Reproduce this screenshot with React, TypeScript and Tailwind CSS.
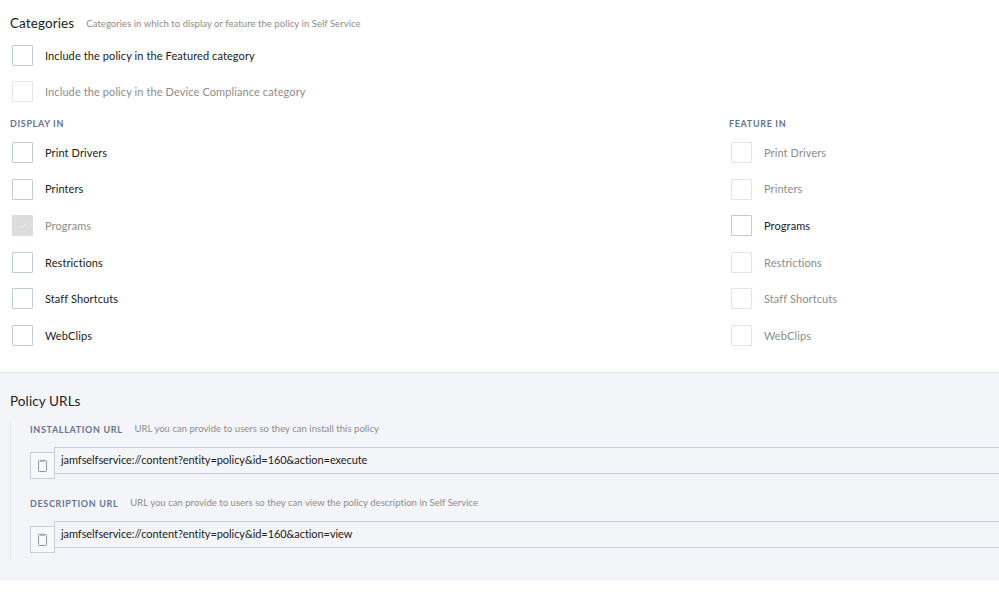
import { Check } from "lucide-react";

const font = { fontFamily: '"Lato", "Liberation Sans", sans-serif' };

function Box({ state }: { state: "on" | "off" | "checked" }) {
  if (state === "checked") {
    return (
      <span className="flex h-[21px] w-[21px] shrink-0 items-center justify-center rounded-[1px] bg-[#dcdcdc]">
        <Check className="h-2.5 w-2.5 text-white" strokeWidth={1.5} />
      </span>
    );
  }
  return (
    <span
      className={
        state === "on"
          ? "h-[21px] w-[21px] shrink-0 rounded-[1px] border border-[#c3cbd6] bg-white"
          : "h-[21px] w-[21px] shrink-0 rounded-[1px] border border-[#e2e4e8] bg-white"
      }
    />
  );
}

function Row({ label, state }: { label: string; state: "on" | "off" | "checked" }) {
  return (
    <div className="flex h-[36.6px] items-center">
      <Box state={state} />
      <span
        className={
          state === "on"
            ? "ml-3 pt-[1px] text-[11px] tracking-[0.1px] text-[#222]"
            : "ml-3 pt-[1px] text-[11px] tracking-[0.1px] text-[#8c8c8c]"
        }
      >
        {label}
      </span>
    </div>
  );
}

function Clipboard() {
  return (
    <svg width="11" height="13" viewBox="0 0 11 13" fill="none" stroke="#949494" strokeWidth="1">
      <rect x="1.5" y="1.5" width="8" height="11" rx="0.8" />
      <path d="M3.5 1h4v1.5h-4z" fill="#c4c4c4" strokeWidth="0.6" />
    </svg>
  );
}

function UrlField({ title, hint, url }: { title: string; hint: string; url: string }) {
  return (
    <div className="mb-[17px]">
      <div className="flex h-[14px] items-center pt-[1px]">
        <span className="text-[9px] font-bold tracking-[0.65px] text-[#64748f]">{title}</span>
        <span className="ml-[12px] text-[9.5px] tracking-[0.03px] text-[#8c8c8c]">{hint}</span>
      </div>
      <div className="mt-[11px] flex items-start">
        <button className="relative z-10 mt-[5px] flex h-[27px] w-[25px] shrink-0 items-center justify-center border border-[#c9ced8] bg-[#f7f8fa]">
          <Clipboard />
        </button>
        <div className="-ml-px -mr-2 flex h-[27px] flex-1 border border-[#c9ced8] bg-[#f4f5f9] pl-[6px] pt-[3px] text-[11px] leading-[17px] tracking-[-0.07px] text-[#222]">
          {url}
        </div>
      </div>
    </div>
  );
}

export default function App() {
  return (
    <div className="h-[610px] w-[999px] overflow-hidden bg-white" style={font}>
      <div className="px-[10px] pt-[15px]">
        <div className="flex h-4 items-center">
          <h2 className="text-[13.5px] tracking-[0.1px] text-[#222]">Categories</h2>
          <span className="ml-[12px] pt-[2px] text-[9.5px] tracking-[0.05px] text-[#8c8c8c]">
            Categories in which to display or feature the policy in Self Service
          </span>
        </div>
        <div className="mt-[6px] pl-[2px]">
          <Row label="Include the policy in the Featured category" state="on" />
          <Row label="Include the policy in the Device Compliance category" state="off" />
        </div>
        <div className="mt-[7px] grid grid-cols-[719px_1fr]">
          <div>
            <div className="h-[14px] text-[9px] font-bold leading-[14px] tracking-[0.65px] text-[#64748f]">DISPLAY IN</div>
            <div className="mt-[3px] pl-[2px]">
              <Row label="Print Drivers" state="on" />
              <Row label="Printers" state="on" />
              <Row label="Programs" state="checked" />
              <Row label="Restrictions" state="on" />
              <Row label="Staff Shortcuts" state="on" />
              <Row label="WebClips" state="on" />
            </div>
          </div>
          <div>
            <div className="h-[14px] text-[9px] font-bold leading-[14px] tracking-[0.65px] text-[#64748f]">FEATURE IN</div>
            <div className="mt-[3px] pl-[2px]">
              <Row label="Print Drivers" state="off" />
              <Row label="Printers" state="off" />
              <Row label="Programs" state="on" />
              <Row label="Restrictions" state="off" />
              <Row label="Staff Shortcuts" state="off" />
              <Row label="WebClips" state="off" />
            </div>
          </div>
        </div>
      </div>
      <section className="mt-[18px] h-[209px] border-t border-[#e6e8ec] bg-[#f4f5f9] px-[10px] pt-[20px]">
        <h2 className="h-4 text-[13.5px] leading-4 tracking-[0.1px] text-[#222]">Policy URLs</h2>
        <div className="mt-[13px] h-[137px] border-l border-[#e6e8ec] pl-[19px] -mr-[10px]">
          <UrlField
            title="INSTALLATION URL"
            hint="URL you can provide to users so they can install this policy"
            url="jamfselfservice://content?entity=policy&id=160&action=execute"
          />
          <UrlField
            title="DESCRIPTION URL"
            hint="URL you can provide to users so they can view the policy description in Self Service"
            url="jamfselfservice://content?entity=policy&id=160&action=view"
          />
        </div>
      </section>
    </div>
  );
}
